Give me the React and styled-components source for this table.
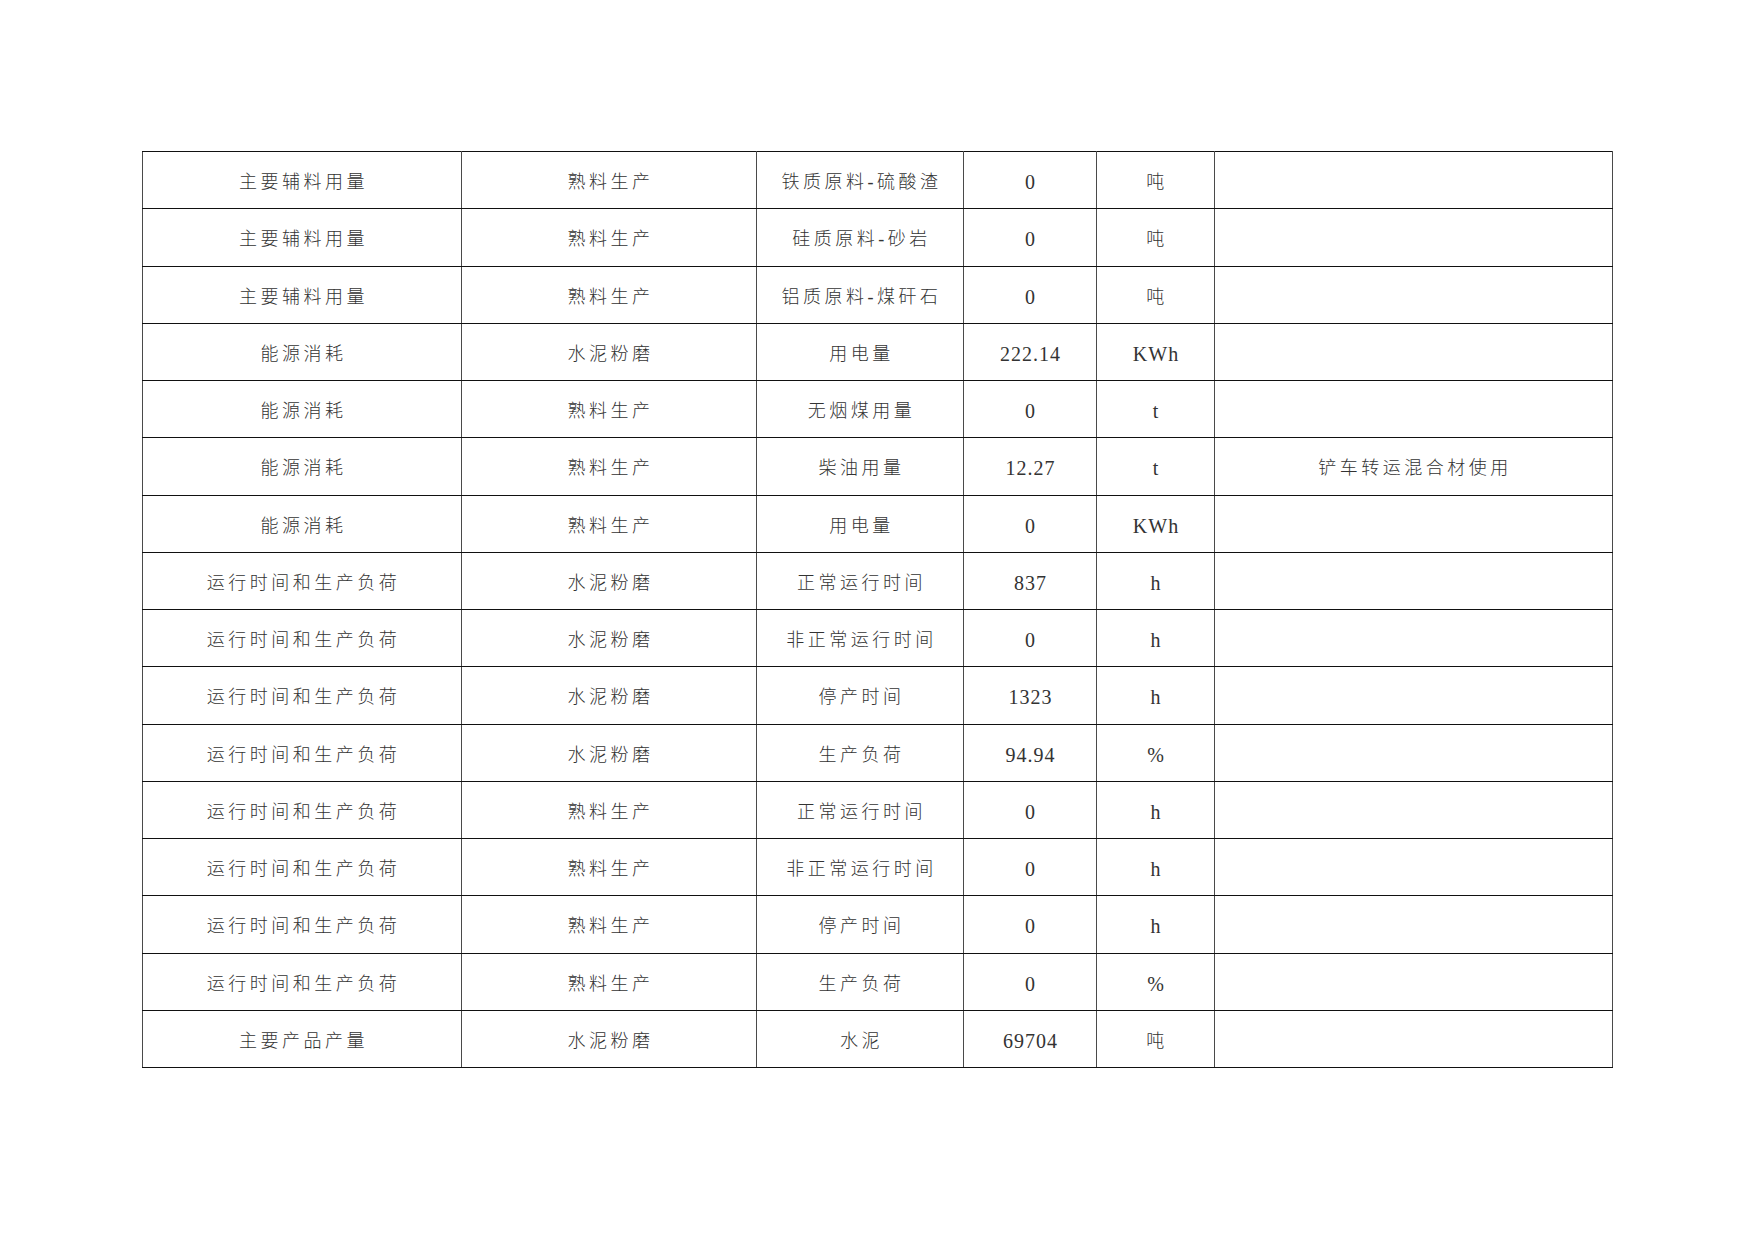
import React from "react";
import styled, { createGlobalStyle } from "styled-components";

const GlobalStyle = createGlobalStyle`
    html, body {
        margin: 0;
        padding: 0;
        background: #ffffff;
    }
`;

const rows = [
    ["主要辅料用量", "熟料生产", "铁质原料-硫酸渣", "0", "吨", ""],
    ["主要辅料用量", "熟料生产", "硅质原料-砂岩", "0", "吨", ""],
    ["主要辅料用量", "熟料生产", "铝质原料-煤矸石", "0", "吨", ""],
    ["能源消耗", "水泥粉磨", "用电量", "222.14", "KWh", ""],
    ["能源消耗", "熟料生产", "无烟煤用量", "0", "t", ""],
    ["能源消耗", "熟料生产", "柴油用量", "12.27", "t", "铲车转运混合材使用"],
    ["能源消耗", "熟料生产", "用电量", "0", "KWh", ""],
    ["运行时间和生产负荷", "水泥粉磨", "正常运行时间", "837", "h", ""],
    ["运行时间和生产负荷", "水泥粉磨", "非正常运行时间", "0", "h", ""],
    ["运行时间和生产负荷", "水泥粉磨", "停产时间", "1323", "h", ""],
    ["运行时间和生产负荷", "水泥粉磨", "生产负荷", "94.94", "%", ""],
    ["运行时间和生产负荷", "熟料生产", "正常运行时间", "0", "h", ""],
    ["运行时间和生产负荷", "熟料生产", "非正常运行时间", "0", "h", ""],
    ["运行时间和生产负荷", "熟料生产", "停产时间", "0", "h", ""],
    ["运行时间和生产负荷", "熟料生产", "生产负荷", "0", "%", ""],
    ["主要产品产量", "水泥粉磨", "水泥", "69704", "吨", ""],
];

const widths = [319, 295, 207, 133, 118, 398];

const Page = styled.div`
    width: 1754px;
    height: 1241px;
    padding: 151px 0 0 142px;
    box-sizing: border-box;
    overflow: hidden;
`;

const Sheet = styled.table`
    border-collapse: collapse;
    table-layout: fixed;
    width: 1470px;
    font-family: "Liberation Serif", "Noto Sans CJK SC", serif;
    color: #333;
`;

const Row = styled.tr`
    height: 57.25px;
`;

const Cell = styled.td`
    border-top: 1px solid #111;
    border-bottom: 1px solid #111;
    border-left: 1px solid #4a4a4a;
    border-right: 1px solid #4a4a4a;
    padding: 4px 0 0 ${(p) => (p.$cjk ? "3px" : "1px")};
    text-align: center;
    vertical-align: middle;
    font-size: ${(p) => (p.$cjk ? "18px" : "20px")};
    font-weight: ${(p) => (p.$cjk ? 300 : 400)};
    letter-spacing: ${(p) => (p.$cjk ? "3.5px" : "1px")};
    line-height: 1;
    white-space: nowrap;
`;

const isCjk = (text) => /[\u4e00-\u9fff]/.test(text);

export default function App() {
    return (
        <>
            <GlobalStyle />
            <Page>
                <Sheet>
                    <colgroup>
                        {widths.map((w, i) => (
                            <col key={i} style={{ width: w }} />
                        ))}
                    </colgroup>
                    <tbody>
                        {rows.map((row, r) => (
                            <Row key={r}>
                                {row.map((text, c) => (
                                    <Cell key={c} $cjk={isCjk(text)}>
                                        {text}
                                    </Cell>
                                ))}
                            </Row>
                        ))}
                    </tbody>
                </Sheet>
            </Page>
        </>
    );
}
